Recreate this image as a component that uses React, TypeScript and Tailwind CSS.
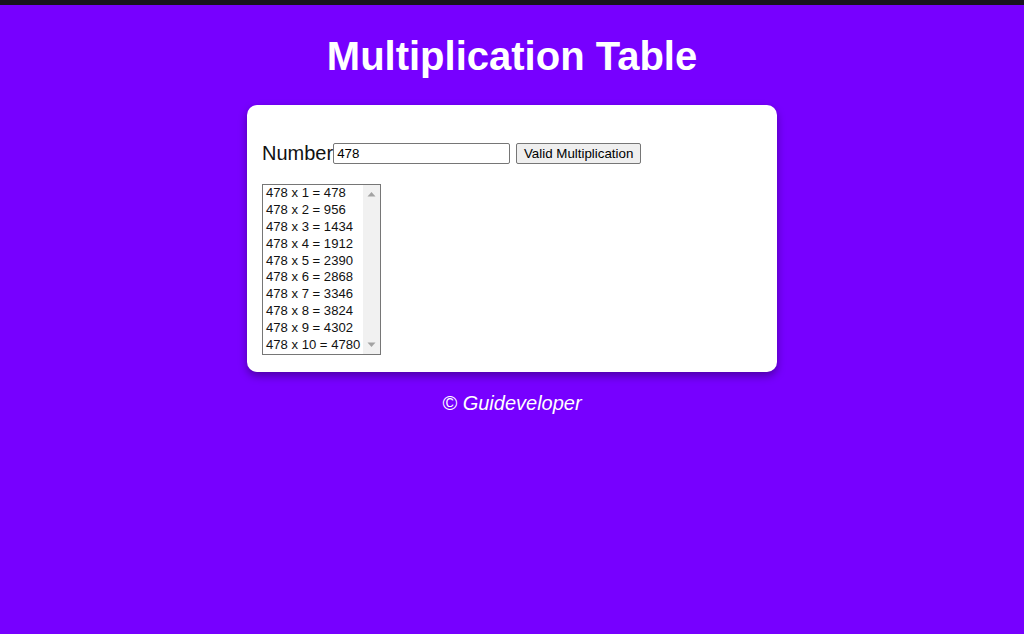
import React from "react";

export default function App() {
  const n = 478;
  const rows = Array.from({ length: 10 }, (_, i) => `${n} x ${i + 1} = ${n * (i + 1)}`);
  return (
    <div className="min-h-[634px] bg-[#7700ff] font-['Liberation_Sans',Arial,sans-serif]">
      <div className="h-[5px] bg-[#18131f]" />
      <h1 className="pt-[28px] text-center text-[40px] font-bold leading-[46px] text-white">
        Multiplication Table
      </h1>
      <div className="mx-auto mt-[26px] w-[530px] rounded-[10px] bg-white px-[15px] pb-[17px] pt-[37px] shadow-[0_4px_8px_rgba(0,0,0,0.35)]">
        <div className="flex items-center">
          <span className="text-[20px] leading-[23px] text-[#111]">Number</span>
          <div className="flex h-[21px] w-[177px] items-center rounded-[2px] border border-[#767676] bg-white px-[3px] text-[13.33px] text-black">
            478
          </div>
          <button className="ml-[6px] flex h-[21px] w-[125px] items-center justify-center rounded-[2px] border border-[#767676] bg-[#efefef] text-[13.33px] text-black">
            Valid Multiplication
          </button>
        </div>
        <div className="mt-[19px] flex w-[119px] overflow-hidden border border-[#767676] bg-white">
          <div className="w-[100px] shrink-0 pl-[3px]">
            {rows.map((r) => (
              <div key={r} className="h-[16.9px] whitespace-nowrap text-[13.1px] leading-[16.9px] text-[#111]">
                {r}
              </div>
            ))}
          </div>
          <div className="flex w-[17px] shrink-0 flex-col justify-between bg-[#f1f1f1] py-[5px]">
            <svg width="17" height="8" viewBox="0 0 17 8">
              <polygon points="4.5,6.5 12.5,6.5 8.5,2" fill="#a3a3a3" />
            </svg>
            <svg width="17" height="8" viewBox="0 0 17 8">
              <polygon points="4.5,1.5 12.5,1.5 8.5,6" fill="#a3a3a3" />
            </svg>
          </div>
        </div>
      </div>
      <p className="mt-[20px] text-center text-[20px] italic leading-[23px] text-white">© Guideveloper</p>
    </div>
  );
}
